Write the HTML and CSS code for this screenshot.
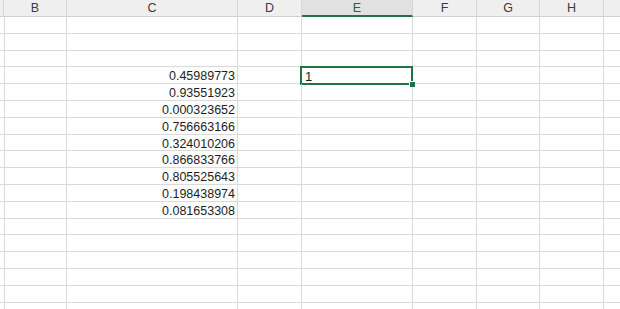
FILE: index.html
```html
<!DOCTYPE html>
<html lang="en">
<head>
  <meta charset="UTF-8">
  <title>Sheet1</title>
  <link rel="stylesheet" href="styles.css">
</head>
<body>
  <div class="sheet" id="sheet">
    <div class="hdr"></div>
    <div class="hdr">B</div>
    <div class="hdr">C</div>
    <div class="hdr">D</div>
    <div class="hdr active">E</div>
    <div class="hdr">F</div>
    <div class="hdr">G</div>
    <div class="hdr">H</div>
    <div class="hdr"></div>
  </div>

  <script>
    const values = {
      4: '0.45989773',
      5: '0.93551923',
      6: '0.000323652',
      7: '0.756663166',
      8: '0.324010206',
      9: '0.866833766',
      10: '0.805525643',
      11: '0.198438974',
      12: '0.081653308'
    };

    const sheet = document.getElementById('sheet');

    for (let row = 1; row <= 18; row++) {
      for (let col = 0; col < 9; col++) {
        const cell = document.createElement('div');
        cell.className = 'cell';

        // column C holds the numbers
        if (col === 2 && values[row]) {
          cell.textContent = values[row];
          cell.classList.add('num');
        }

        // E4 is the selected cell
        if (col === 4 && row === 4) {
          cell.textContent = '1';
          cell.classList.add('selected');
          const handle = document.createElement('span');
          handle.className = 'fill-handle';
          cell.appendChild(handle);
        }

        sheet.appendChild(cell);
      }
    }
  </script>
</body>
</html>
```

FILE: styles.css
```css
body {
  margin: 0;
  background-color: #fff;
  overflow: hidden;
  font-family: "Liberation Sans", Arial, sans-serif;
}

.sheet {
  display: grid;
  grid-template-columns: 4px 63px 171px 64px 111px 64px 63px 64px 40px;
  grid-template-rows: 17px;
  grid-auto-rows: 16.8px;
}

.hdr {
  background-color: #efefef;
  border-right: 1px solid #d6d6d6;
  border-bottom: 1px solid #d0d0d0;
  color: #3a3a3a;
  font-size: 12.5px;
  line-height: 17px;
  text-align: center;
}

.hdr.active {
  background-color: #e1e1e1;
  color: #2e5e44;
  border-bottom: 2px solid #217346;
  line-height: 16px;
}

.cell {
  position: relative;
  border-right: 1px solid #dadada;
  border-bottom: 1px solid #dadada;
  font-size: 12.5px;
  line-height: 19px;
  color: #1e1e1e;
  padding: 0 2px;
  white-space: nowrap;
}

.cell.num {
  text-align: right;
}

.cell.selected {
  padding-left: 3px;
  font-size: 13px;
}

.cell.selected::after {
  content: "";
  position: absolute;
  top: -1px;
  left: -2px;
  right: -1px;
  bottom: -2px;
  border: 2px solid #217346;
}

.fill-handle {
  position: absolute;
  right: -3px;
  bottom: -4px;
  z-index: 1;
  width: 5px;
  height: 5px;
  background-color: #217346;
  border: 1px solid #fff;
  border-width: 1px 0 0 1px;
}
```
